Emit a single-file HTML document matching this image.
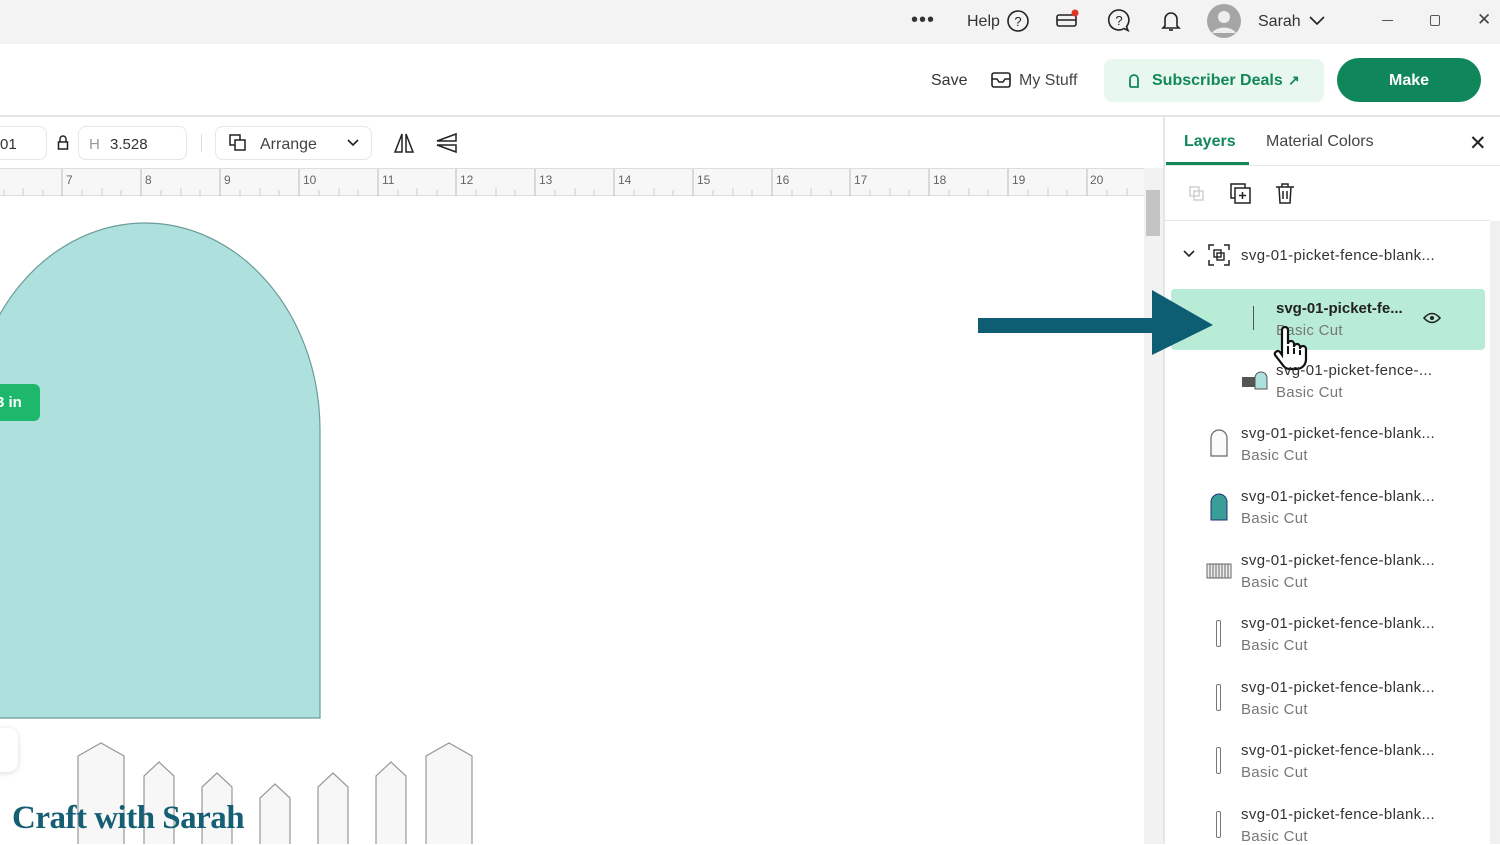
<!DOCTYPE html>
<html><head><meta charset="utf-8"><style>
*{margin:0;padding:0;box-sizing:border-box}
body{width:1500px;height:844px;overflow:hidden;position:relative;background:#fff;font-family:"Liberation Sans",sans-serif;color:#333}
.a{position:absolute}
.t{font-size:15px;color:#333}
.name{font-size:15px;color:#333;position:absolute;left:1241px;letter-spacing:0.35px}
.sub{font-size:15px;color:#777;position:absolute;left:1241px;letter-spacing:0.3px}
</style></head><body>
<!-- top bar -->
<div class="a" style="left:0;top:0;width:1500px;height:44px;background:#f3f3f3"></div>
<div class="a t" style="left:911px;top:9px;font-size:20px;letter-spacing:1px">•••</div>
<div class="a t" style="left:967px;top:13px;font-size:16px">Help</div>
<svg class="a" style="left:1006px;top:9px" width="24" height="24"><circle cx="12" cy="12" r="10" fill="none" stroke="#222" stroke-width="1.6"/><text x="12" y="17" font-size="13" text-anchor="middle" font-family="Liberation Sans" fill="#222">?</text></svg>
<svg class="a" style="left:1055px;top:9px" width="26" height="22"><rect x="2" y="6" width="19" height="11" rx="2" fill="none" stroke="#222" stroke-width="1.6"/><line x1="2" y1="11" x2="21" y2="11" stroke="#222" stroke-width="1.6"/><circle cx="20" cy="4" r="3.5" fill="#d32"/></svg>
<svg class="a" style="left:1107px;top:8px" width="26" height="26"><path d="M12 2a10 10 0 1 0 5 18.5l4 2-1.5-4A10 10 0 0 0 12 2z" fill="none" stroke="#222" stroke-width="1.6"/><text x="12" y="17" font-size="13" text-anchor="middle" font-family="Liberation Sans" fill="#222">?</text></svg>
<svg class="a" style="left:1159px;top:8px" width="26" height="26"><path d="M6 18V11a6 6 0 0 1 12 0v7l2 2H4z" fill="none" stroke="#222" stroke-width="1.6"/><path d="M10 22h4" stroke="#222" stroke-width="1.6"/></svg>
<svg class="a" style="left:1206px;top:3px" width="36" height="36"><circle cx="18" cy="18" r="17" fill="#a5a5a5"/><circle cx="18" cy="14" r="6" fill="#eee"/><path d="M6 30a13 9 0 0 1 24 0" fill="#eee"/></svg>
<div class="a t" style="left:1258px;top:13px;font-size:16px">Sarah</div>
<svg class="a" style="left:1308px;top:14px" width="18" height="14"><path d="M2 3l7 7 7-7" fill="none" stroke="#222" stroke-width="1.6"/></svg>
<div class="a" style="left:1382px;top:20px;width:11px;height:1px;background:#555"></div>
<div class="a" style="left:1430px;top:15px;width:10px;height:11px;border:1px solid #555;border-radius:2px"></div>
<div class="a t" style="left:1477px;top:10px;font-size:17px;color:#444">✕</div>
<!-- header -->
<div class="a" style="left:0;top:115px;width:1500px;height:2px;background:#e4e4e4"></div>
<div class="a t" style="left:931px;top:72px;font-size:16px">Save</div>
<svg class="a" style="left:990px;top:70px" width="22" height="20"><rect x="2" y="3" width="18" height="14" rx="2" fill="none" stroke="#222" stroke-width="1.6"/><path d="M2 9l5 0 2 3h4l2-3h5" fill="none" stroke="#222" stroke-width="1.5"/></svg>
<div class="a t" style="left:1019px;top:72px;font-size:16px;color:#444">My Stuff</div>
<div class="a" style="left:1104px;top:59px;width:220px;height:43px;background:#e8f8ef;border-radius:8px"></div>
<svg class="a" style="left:1125px;top:71px" width="18" height="20"><path d="M5 16V8a4 4 0 0 1 8 0v2M5 16h8V10" fill="none" stroke="#12885a" stroke-width="1.8"/></svg>
<div class="a" style="left:1152px;top:72px;font-size:16px;font-weight:bold;color:#12885a">Subscriber Deals</div>
<div class="a" style="left:1288px;top:72px;font-size:14px;font-weight:bold;color:#12885a">↗</div>
<div class="a" style="left:1337px;top:58px;width:144px;height:44px;background:#10875a;border-radius:22px;color:#fff;font-weight:bold;font-size:16px;text-align:center;line-height:46px">Make</div>
<!-- toolbar -->
<div class="a" style="left:-10px;top:126px;width:57px;height:34px;border:1px solid #e6e6e6;border-radius:8px"></div>
<div class="a t" style="left:0;top:136px">01</div>
<svg class="a" style="left:56px;top:135px" width="14" height="16"><path d="M4 7V4a3 3 0 0 1 6 0v3" fill="none" stroke="#222" stroke-width="1.5"/><rect x="2.5" y="7" width="9" height="7" fill="none" stroke="#222" stroke-width="1.5"/></svg>
<div class="a" style="left:78px;top:126px;width:109px;height:34px;border:1px solid #e6e6e6;border-radius:8px"></div>
<div class="a t" style="left:89px;top:136px;color:#999">H</div>
<div class="a t" style="left:110px;top:136px">3.528</div>
<div class="a" style="left:201px;top:134px;width:1px;height:18px;background:#ddd"></div>
<div class="a" style="left:215px;top:126px;width:157px;height:34px;border:1px solid #e6e6e6;border-radius:8px"></div>
<svg class="a" style="left:228px;top:133px" width="20" height="20"><rect x="2" y="2" width="10" height="10" fill="none" stroke="#222" stroke-width="1.5"/><rect x="7" y="7" width="10" height="10" fill="#fff" stroke="#222" stroke-width="1.5"/></svg>
<div class="a t" style="left:260px;top:136px;font-size:16px;color:#444">Arrange</div>
<svg class="a" style="left:346px;top:138px" width="14" height="10"><path d="M2 2l5 5 5-5" fill="none" stroke="#222" stroke-width="1.6"/></svg>
<svg class="a" style="left:392px;top:131px" width="24" height="24"><path d="M10 3L3 21h7zM14 3l7 18h-7z" fill="none" stroke="#222" stroke-width="1.5"/></svg>
<svg class="a" style="left:434px;top:132px" width="26" height="22"><path d="M22 2L3 9h19zM22 20L3 13h19z" fill="none" stroke="#222" stroke-width="1.5"/></svg>
<!-- ruler -->
<div class="a" style="left:0;top:168px;width:1144px;height:28px;background:#f7f7f7;border-top:1px solid #ddd;border-bottom:1px solid #ddd"></div>
<svg class="a" style="left:0;top:169px" width="1144" height="27">
<g stroke="#bbb" stroke-width="1">
<line x1="62" y1="0" x2="62" y2="27"/><line x1="141" y1="0" x2="141" y2="27"/><line x1="220" y1="0" x2="220" y2="27"/><line x1="299" y1="0" x2="299" y2="27"/><line x1="378" y1="0" x2="378" y2="27"/><line x1="456" y1="0" x2="456" y2="27"/><line x1="535" y1="0" x2="535" y2="27"/><line x1="614" y1="0" x2="614" y2="27"/><line x1="693" y1="0" x2="693" y2="27"/><line x1="772" y1="0" x2="772" y2="27"/><line x1="850" y1="0" x2="850" y2="27"/><line x1="929" y1="0" x2="929" y2="27"/><line x1="1008" y1="0" x2="1008" y2="27"/><line x1="1087" y1="0" x2="1087" y2="27"/>
</g>
<g stroke="#ccc" stroke-width="1">
<path d="M82 27v-6M102 27v-8M121 27v-6M161 27v-6M181 27v-8M200 27v-6M240 27v-6M260 27v-8M279 27v-6M319 27v-6M339 27v-8M358 27v-6M398 27v-6M417 27v-8M437 27v-6M476 27v-6M496 27v-8M515 27v-6M555 27v-6M575 27v-8M594 27v-6M634 27v-6M654 27v-8M673 27v-6M713 27v-6M733 27v-8M752 27v-6M792 27v-6M811 27v-8M831 27v-6M870 27v-6M890 27v-8M909 27v-6M949 27v-6M969 27v-8M988 27v-6M1028 27v-6M1048 27v-8M1067 27v-6M1107 27v-6M1127 27v-8M43 27v-6M23 27v-8M4 27v-6"/></g>
<g fill="#666" font-size="12" font-family="Liberation Sans">
<text x="66" y="15">7</text><text x="145" y="15">8</text><text x="224" y="15">9</text><text x="303" y="15">10</text><text x="382" y="15">11</text><text x="460" y="15">12</text><text x="539" y="15">13</text><text x="618" y="15">14</text><text x="697" y="15">15</text><text x="776" y="15">16</text><text x="854" y="15">17</text><text x="933" y="15">18</text><text x="1012" y="15">19</text><text x="1090" y="15">20</text></g>
</svg>
<!-- canvas scrollbar -->
<div class="a" style="left:1144px;top:168px;width:19px;height:676px;background:#f2f2f2"></div>
<div class="a" style="left:1146px;top:190px;width:14px;height:46px;background:#c4c4c4"></div>
<div class="a" style="left:1163px;top:117px;width:2px;height:727px;background:#e6e6e6"></div>
<!-- canvas shapes -->
<svg class="a" style="left:0;top:196px" width="1144" height="648">
<path d="M-30 522 V234 A175 207 0 0 1 320 234 V522 Z" fill="#aee0dd" stroke="#6a9c98" stroke-width="1.2"/>
<g fill="#f7f7f7" stroke="#999" stroke-width="1.2">
<path d="M78 660V560L101 547L124 560V660"/>
<path d="M144 660V580L159 566L174 580V660"/>
<path d="M202 660V591L217 577L232 591V660"/>
<path d="M260 660V602L275 588L290 602V660"/>
<path d="M318 660V591L333 577L348 591V660"/>
<path d="M376 660V580L391 566L406 580V660"/>
<path d="M426 660V560L449 547L472 560V660"/>
</g>
</svg>
<div class="a" style="left:-10px;top:384px;width:50px;height:37px;background:#1db86c;border-radius:6px;color:#fff;font-weight:bold;font-size:15px;line-height:37px;padding-left:6px">3 in</div>
<div class="a" style="left:-20px;top:728px;width:38px;height:44px;background:#fff;border-radius:10px;box-shadow:0 1px 6px rgba(0,0,0,.15)"></div>
<div class="a" style="left:12px;top:800px;font-family:'Liberation Serif',serif;font-size:33px;font-weight:bold;color:#145f74;letter-spacing:-0.5px">Craft with Sarah</div>
<!-- panel -->
<div class="a" style="left:1184px;top:133px;font-size:16px;font-weight:bold;color:#12885a">Layers</div>
<div class="a" style="left:1166px;top:162px;width:83px;height:3px;background:#12885a"></div>
<div class="a" style="left:1266px;top:133px;font-size:16px;color:#444">Material Colors</div>
<div class="a" style="left:1165px;top:165px;width:335px;height:1px;background:#e6e6e6"></div>
<div class="a" style="left:1469px;top:131px;font-size:21px;color:#222">✕</div>
<svg class="a" style="left:1186px;top:183px" width="22" height="22"><rect x="4" y="4" width="9" height="9" fill="none" stroke="#ccc" stroke-width="1.4"/><rect x="8" y="8" width="9" height="9" fill="none" stroke="#ccc" stroke-width="1.4"/></svg>
<svg class="a" style="left:1229px;top:182px" width="24" height="24"><rect x="2" y="2" width="14" height="14" fill="none" stroke="#222" stroke-width="1.5"/><rect x="6" y="6" width="15" height="15" fill="#fff" stroke="#222" stroke-width="1.5"/><path d="M13.5 10v7M10 13.5h7" stroke="#222" stroke-width="1.5"/></svg>
<svg class="a" style="left:1274px;top:182px" width="22" height="24"><path d="M2 5h18M8 5V2h6v3M5 5l1 16h10l1-16M9 9v8M13 9v8" fill="none" stroke="#222" stroke-width="1.5"/></svg>
<div class="a" style="left:1165px;top:220px;width:325px;height:1px;background:#e6e6e6"></div>
<div class="a" style="left:1490px;top:221px;width:10px;height:623px;background:#f0f0f0"></div>
<svg class="a" style="left:1182px;top:249px" width="14" height="10"><path d="M2 2l5 5 5-5" fill="none" stroke="#222" stroke-width="1.6"/></svg>
<svg class="a" style="left:1208px;top:244px" width="22" height="22"><path d="M1 6V1h5M16 1h5v5M21 16v5h-5M6 21H1v-5" fill="none" stroke="#222" stroke-width="1.5"/><rect x="6" y="6" width="7" height="7" fill="none" stroke="#222" stroke-width="1.4"/><rect x="9" y="9" width="7" height="7" fill="none" stroke="#222" stroke-width="1.4"/></svg>
<div class="name" style="top:247px">svg-01-picket-fence-blank...</div>
<div class="a" style="left:1171px;top:289px;width:314px;height:61px;background:#b8ecd6;border-radius:4px"></div>
<div class="a" style="left:1253px;top:306px;width:1px;height:24px;background:#555"></div>
<div class="a" style="left:1276px;top:300px;font-size:15px;font-weight:bold;color:#222">svg-01-picket-fe...</div>
<div class="a" style="left:1276px;top:322px;font-size:15px;color:#777;letter-spacing:0.3px">Basic Cut</div>
<svg class="a" style="left:1423px;top:310px" width="18" height="16"><path d="M1 8q8-9 16 0q-8 9-16 0z" fill="none" stroke="#222" stroke-width="1.6"/><circle cx="9" cy="8" r="2" fill="#222"/></svg>
<svg class="a" style="left:1272px;top:326px" width="36" height="46"><path d="M10 4a3 3 0 0 1 6 0v14a3 3 0 0 1 6 0v3a3 3 0 0 1 6 0v2a3 3 0 0 1 6 0v10c0 6-4 10-10 10h-6c-4 0-6-2-8-5l-7-9a3 3 0 0 1 5-3l2 3z" fill="#fff" stroke="#111" stroke-width="2.2"/><path d="M16 20v8M22 22v6M28 24v5" stroke="#111" stroke-width="2"/></svg>
<svg class="a" style="left:1240px;top:369px" width="30" height="22"><rect x="2" y="8" width="14" height="10" fill="#555"/><path d="M15 20V9a6 6 0 0 1 12 0v11z" fill="#aee0dd" stroke="#555"/></svg>
<div class="a" style="left:1276px;top:362px;font-size:15px;color:#333;letter-spacing:0.35px">svg-01-picket-fence-...</div>
<div class="a" style="left:1276px;top:384px;font-size:15px;color:#777;letter-spacing:0.3px">Basic Cut</div>
<svg class="a" style="left:1208px;top:428px" width="22" height="30"><path d="M3 28V10a8 8 0 0 1 16 0v18z" fill="#fafafa" stroke="#666" stroke-width="1.2"/></svg>
<div class="name" style="top:425px">svg-01-picket-fence-blank...</div><div class="sub" style="top:447px">Basic Cut</div>
<svg class="a" style="left:1208px;top:492px" width="22" height="30"><path d="M3 28V10a8 8 0 0 1 16 0v18z" fill="#3a9e98" stroke="#237" stroke-width="1"/></svg>
<div class="name" style="top:488px">svg-01-picket-fence-blank...</div><div class="sub" style="top:510px">Basic Cut</div>
<svg class="a" style="left:1205px;top:558px" width="28" height="24"><rect x="2" y="6" width="24" height="14" fill="#eee" stroke="#666"/><path d="M5 6v14M8 6v14M11 6v14M14 6v14M17 6v14M20 6v14M23 6v14" stroke="#666"/></svg>
<div class="name" style="top:552px">svg-01-picket-fence-blank...</div><div class="sub" style="top:574px">Basic Cut</div>
<div class="a" style="left:1216px;top:620px;width:5px;height:27px;border:1px solid #777;border-radius:2px"></div>
<div class="name" style="top:615px">svg-01-picket-fence-blank...</div><div class="sub" style="top:637px">Basic Cut</div>
<div class="a" style="left:1216px;top:684px;width:5px;height:27px;border:1px solid #777;border-radius:2px"></div>
<div class="name" style="top:679px">svg-01-picket-fence-blank...</div><div class="sub" style="top:701px">Basic Cut</div>
<div class="a" style="left:1216px;top:747px;width:5px;height:27px;border:1px solid #777;border-radius:2px"></div>
<div class="name" style="top:742px">svg-01-picket-fence-blank...</div><div class="sub" style="top:764px">Basic Cut</div>
<div class="a" style="left:1216px;top:811px;width:5px;height:27px;border:1px solid #777;border-radius:2px"></div>
<div class="name" style="top:806px">svg-01-picket-fence-blank...</div><div class="sub" style="top:828px">Basic Cut</div>
<!-- arrow (on top) -->
<svg class="a" style="left:975px;top:285px" width="245" height="75"><rect x="3" y="33" width="180" height="15" fill="#0d5e72"/><path d="M177 5L238 40L177 70Z" fill="#0d5e72"/></svg>
</body></html>
